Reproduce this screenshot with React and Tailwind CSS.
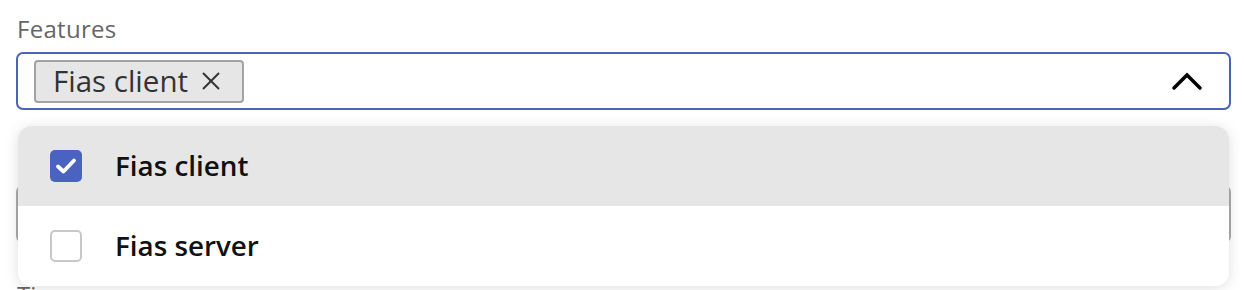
import React from "react";

function ChevronUp() {
  return (
    <svg width="32" height="20" viewBox="0 0 32 20" fill="none">
      <polyline points="3,17 16,4 29,17" stroke="#000" strokeWidth="3.5" strokeLinecap="round" strokeLinejoin="miter" />
    </svg>
  );
}

function XIcon() {
  return (
    <svg width="22" height="22" viewBox="0 0 22 22" fill="none">
      <line x1="3" y1="3" x2="19" y2="19" stroke="#333" strokeWidth="2" />
      <line x1="19" y1="3" x2="3" y2="19" stroke="#333" strokeWidth="2" />
    </svg>
  );
}

function Check() {
  return (
    <svg width="22" height="18" viewBox="0 0 22 18" fill="none">
      <polyline points="3,9.5 8.5,14.5 19,3.5" stroke="#fff" strokeWidth="3.8" strokeLinecap="round" strokeLinejoin="round" />
    </svg>
  );
}

export default function App() {
  return (
    <div
      className="relative w-[1244px] h-[290px] overflow-hidden bg-white pl-4 pr-[13px] pt-[15px]"
      style={{ fontFamily: '"Open Sans", "Noto Sans", sans-serif' }}
    >
      <div className="flex flex-col gap-[38px]">
        <div className="relative">
          <div className="text-[24px] leading-[28px] text-[#666] mb-[9px] pl-px tracking-[0.3px]">Features</div>
          <div className="h-[58px] border-2 border-[#4a63b8] rounded-[7px] flex items-center pl-4 pr-[26px]">
            <div className="h-[43px] w-[210px] bg-[#e6e6e6] border-2 border-[#a3a3a3] rounded-[4px] flex items-center pl-[17px] gap-[12px]">
              <span className="text-[29.5px] leading-none text-[#333]">Fias client</span>
              <XIcon />
            </div>
            <div className="ml-auto flex items-center">
              <ChevronUp />
            </div>
          </div>
          <div className="absolute left-[2px] top-[111px] w-[1211px] z-10 bg-white rounded-[14px] overflow-hidden shadow-[0_2px_14px_rgba(0,0,0,0.13)]">
            <div className="h-[80px] bg-[#e6e6e6] flex items-center pl-[32px] gap-[33px]">
              <div className="w-[32px] h-[32px] rounded-[5px] bg-[#4a63c0] flex items-center justify-center">
                <Check />
              </div>
              <span className="text-[27.8px] font-semibold text-[#111]">Fias client</span>
            </div>
            <div className="h-[80px] bg-white flex items-center pl-[32px] gap-[33px]">
              <div className="w-[32px] h-[32px] rounded-[5px] border-2 border-[#c8c8c8] bg-white" />
              <span className="text-[27.8px] font-semibold text-[#111]">Fias server</span>
            </div>
          </div>
        </div>
        <div>
          <div className="text-[24px] leading-[28px] text-[#666] mb-[9px] pl-px">Environment</div>
          <div className="h-[58px] border-2 border-[#aaaaaa] rounded-[7px]" />
        </div>
        <div>
          <div className="text-[24px] leading-[28px] text-[#666] mb-[9px] pl-px">Tier</div>
        </div>
      </div>
    </div>
  );
}
